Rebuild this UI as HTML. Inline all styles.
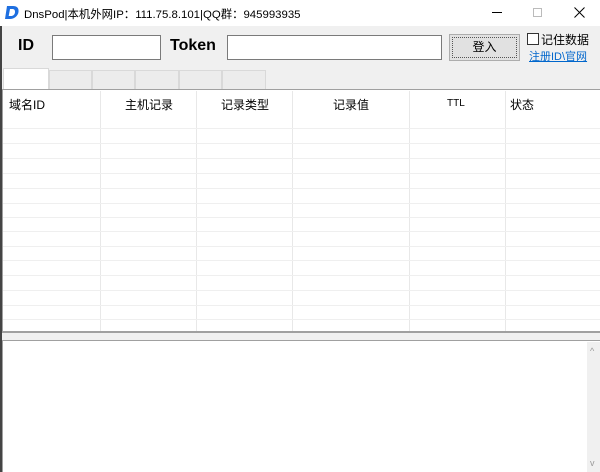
<!DOCTYPE html>
<html><head><meta charset="utf-8"><style>
*{margin:0;padding:0;box-sizing:border-box}
body{width:600px;height:472px;background:#f0f0f0;position:relative;overflow:hidden;font-family:"Liberation Sans","Noto Sans CJK SC",sans-serif;font-size:12px;color:#000}
.a{position:absolute}
.title{left:0;top:0;width:600px;height:26px;background:#fff}
.inp{background:#fff;border:1px solid #7a7a7a}
.tab{top:70px;height:19px;background:#ececec;border:1px solid #d9d9d9;border-bottom:none}
.hl{left:3px;width:597px;height:1px;background:#efefef}
.vl{top:91px;width:1px;height:240px;background:#e8e8e8}
.h{top:96px;font-size:12px}
</style></head><body>
<div class="a" style="left:0;top:26px;width:2px;height:446px;background:#444"></div>
<div class="a title"></div>
<svg class="a" style="left:4px;top:5px" width="16" height="15" viewBox="0 0 16 15"><path d="M3 1h6c4 0 6 2 5.5 6S10 14 6 14H1L3 1zM6 4l-1.3 7H7c2 0 3.8-1.5 4-3.8C11.2 5 10 4 8.5 4z" fill="#1e6fe0"/></svg>
<div class="a" style="left:24px;top:6px;font-size:11.4px;color:#000">DnsPod|本机外网IP：111.75.8.101|QQ群：945993935</div>
<div class="a" style="left:492px;top:12px;width:10px;height:1px;background:#000"></div>
<div class="a" style="left:533px;top:8px;width:9px;height:9px;border:1px solid #bbb"></div>
<svg class="a" style="left:574px;top:7px" width="11" height="11" viewBox="0 0 11 11"><path d="M0.5 0.5L10.5 10.5M10.5 0.5L0.5 10.5" stroke="#000" stroke-width="1"/></svg>
<div class="a" style="left:18px;top:37px;font-size:16px;font-weight:bold">ID</div>
<div class="a inp" style="left:52px;top:35px;width:109px;height:25px"></div>
<div class="a" style="left:170px;top:37px;font-size:16px;font-weight:bold">Token</div>
<div class="a inp" style="left:227px;top:35px;width:215px;height:25px"></div>
<div class="a" style="left:449px;top:34px;width:71px;height:27px;background:#e1e1e1;border:1px solid #adadad;outline:1px dotted #555;outline-offset:-4px;text-align:center;line-height:25px">登入</div>
<div class="a" style="left:527px;top:33px;width:12px;height:12px;border:1px solid #333;background:#fff"></div>
<div class="a" style="left:541px;top:31px;font-size:12px">记住数据</div>
<div class="a" style="left:529px;top:48px;font-size:11px;color:#0066cc;text-decoration:underline">注册ID\官网</div>
<div class="a tab" style="left:49px;width:43px"></div>
<div class="a tab" style="left:92px;width:43px"></div>
<div class="a tab" style="left:135px;width:44px"></div>
<div class="a tab" style="left:179px;width:43px"></div>
<div class="a tab" style="left:222px;width:44px"></div>
<div class="a" style="left:3px;top:68px;width:46px;height:22px;background:#fff;border:1px solid #d9d9d9;border-bottom:none"></div>
<div class="a" style="left:2px;top:89px;width:598px;height:244px;background:#fff;border:1px solid #a0a0a0;border-right:none;border-bottom:2px solid #a0a0a0"></div>
<div class="a vl" style="left:100px"></div><div class="a vl" style="left:196px"></div><div class="a vl" style="left:292px"></div><div class="a vl" style="left:409px"></div><div class="a vl" style="left:505px"></div>
<div class="a hl" style="top:128px"></div><div class="a hl" style="top:143px"></div><div class="a hl" style="top:158px"></div><div class="a hl" style="top:173px"></div><div class="a hl" style="top:188px"></div><div class="a hl" style="top:203px"></div><div class="a hl" style="top:217px"></div><div class="a hl" style="top:231px"></div><div class="a hl" style="top:246px"></div><div class="a hl" style="top:260px"></div><div class="a hl" style="top:275px"></div><div class="a hl" style="top:290px"></div><div class="a hl" style="top:305px"></div><div class="a hl" style="top:319px"></div>
<div class="a h" style="left:9px">域名ID</div>
<div class="a h" style="left:125px">主机记录</div>
<div class="a h" style="left:221px">记录类型</div>
<div class="a h" style="left:333px">记录值</div>
<div class="a h" style="left:447px;font-size:10px;top:98px">TTL</div>
<div class="a h" style="left:510px">状态</div>
<div class="a" style="left:2px;top:340px;width:598px;height:132px;background:#fff;border:1px solid #a0a0a0;border-right:none;border-bottom:none"></div>
<div class="a" style="left:587px;top:342px;width:13px;height:130px;background:#f0f0f0"></div>
<div class="a" style="left:590px;top:346px;font-size:9px;color:#999">^</div>
<div class="a" style="left:590px;top:458px;font-size:9px;color:#999">v</div>
</body></html>
